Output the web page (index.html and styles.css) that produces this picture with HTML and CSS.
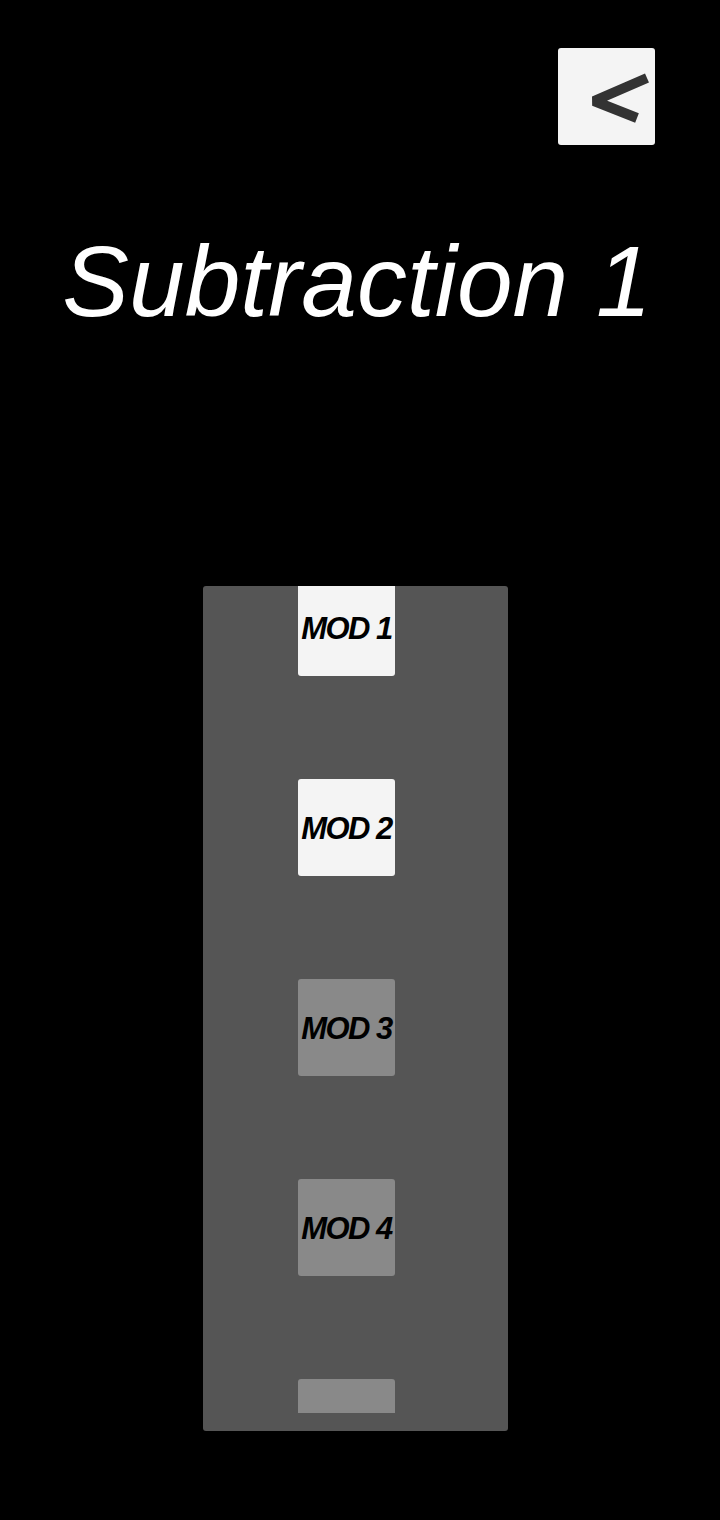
FILE: index.html
```html
<!DOCTYPE html>
<html lang="en">
<head>
    <meta charset="UTF-8">
    <meta name="viewport" content="width=device-width, initial-scale=1.0">
    <title>Subtraction 1</title>
    <link rel="stylesheet" href="styles.css">
</head>
<body>
    <div class="screen">
        <div class="topbar">
            <button class="back-btn" aria-label="Back">
                <svg viewBox="0 0 97 97" width="97" height="97">
                    <polyline points="89,30 36,53 79,70" fill="none" stroke="#333" stroke-width="10" stroke-linejoin="bevel" stroke-linecap="butt"/>
                </svg>
            </button>
        </div>

        <h1 class="title">Subtraction 1</h1>

        <div class="mod-panel">
            <div class="mod-scroll">
                <div class="mod-list">
                    <div class="mod unlocked">MOD 1</div>
                    <div class="mod unlocked">MOD 2</div>
                    <div class="mod locked">MOD 3</div>
                    <div class="mod locked">MOD 4</div>
                    <!-- last tile only peeks in at the bottom edge -->
                    <div class="mod locked"></div>
                </div>
            </div>
        </div>
    </div>
</body>
</html>
```

FILE: styles.css
```css
* {
    margin: 0;
    padding: 0;
    box-sizing: border-box;
}

body {
    background: #000;
    font-family: "Liberation Sans", Arial, sans-serif;
    width: 720px;
    height: 1520px;
    overflow: hidden;
}

.screen {
    display: flex;
    flex-direction: column;
}

.topbar {
    display: flex;
    justify-content: flex-end;
    padding: 48px 65px 0 0;
}

.back-btn {
    width: 97px;
    height: 97px;
    background: #f4f4f4;
    border: none;
    border-radius: 3px;
    display: block;
    cursor: pointer;
}

.back-btn svg {
    display: block;
}

.title {
    margin-top: 79px;
    padding-right: 6px;
    color: #fff;
    font-size: 100px;
    font-style: italic;
    font-weight: normal;
    line-height: 115px;
    text-align: center;
}

/* module list sits in a scrolled-down column */
.mod-panel {
    margin: 247px 0 0 203px;
    width: 305px;
    height: 845px;
    background: #555;
    border-radius: 3px;
    padding-bottom: 18px;
    display: flex;
    flex-direction: column;
}

.mod-scroll {
    flex: 1;
    overflow: hidden;
}

.mod-list {
    display: flex;
    flex-direction: column;
    gap: 103px;
    margin-top: -7px;
    padding-left: 95px;
}

.mod {
    width: 97px;
    height: 97px;
    flex-shrink: 0;
    border-radius: 3px;
    display: flex;
    align-items: center;
    justify-content: center;
    padding-top: 2px;
    color: #000;
    font-size: 31px;
    font-style: italic;
    font-weight: bold;
    letter-spacing: -1.5px;
    white-space: nowrap;
}

.mod.unlocked {
    background: #f4f4f4;
}

.mod.locked {
    background: #898989;
}
```
